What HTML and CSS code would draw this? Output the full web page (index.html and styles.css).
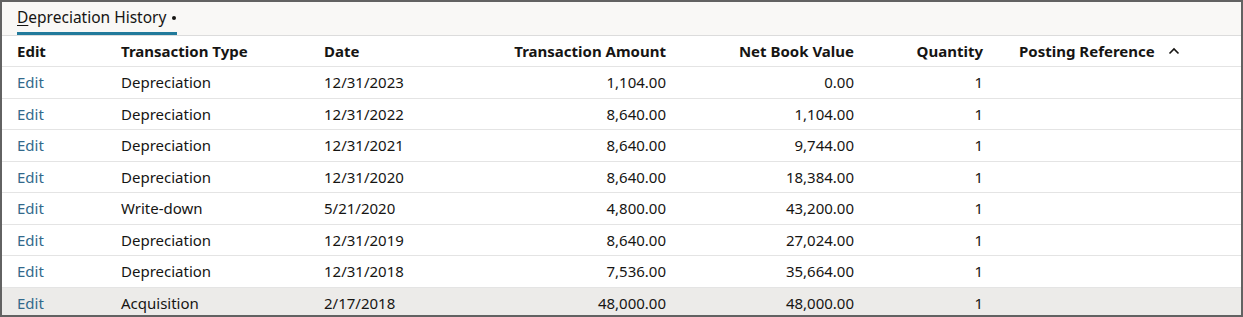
FILE: index.html
```html
<!DOCTYPE html>
<html>
<head>
<meta charset="utf-8">
<link rel="stylesheet" href="styles.css">
</head>
<body>
<div class="frame">
  <div class="tabbar">
    <div class="tab"><span class="tab-label"><u>D</u>epreciation History</span><span class="tab-dot"></span></div>
  </div>
  <div class="table">
    <div class="row head">
      <div class="c c-edit">Edit</div>
      <div class="c c-type">Transaction Type</div>
      <div class="c c-date">Date</div>
      <div class="c c-amt num">Transaction Amount</div>
      <div class="c c-nbv num">Net Book Value</div>
      <div class="c c-qty num">Quantity</div>
      <div class="c c-ref">Posting Reference<svg class="caret" width="12" height="8" viewBox="0 0 12 8"><path d="M1.5 6.5 L6 2 L10.5 6.5" fill="none" stroke="#161513" stroke-width="1.6"/></svg></div>
    </div>
    <div class="row">
      <div class="c c-edit link">Edit</div><div class="c c-type">Depreciation</div><div class="c c-date">12/31/2023</div><div class="c c-amt num">1,104.00</div><div class="c c-nbv num">0.00</div><div class="c c-qty num">1</div><div class="c c-ref"></div>
    </div>
    <div class="row">
      <div class="c c-edit link">Edit</div><div class="c c-type">Depreciation</div><div class="c c-date">12/31/2022</div><div class="c c-amt num">8,640.00</div><div class="c c-nbv num">1,104.00</div><div class="c c-qty num">1</div><div class="c c-ref"></div>
    </div>
    <div class="row">
      <div class="c c-edit link">Edit</div><div class="c c-type">Depreciation</div><div class="c c-date">12/31/2021</div><div class="c c-amt num">8,640.00</div><div class="c c-nbv num">9,744.00</div><div class="c c-qty num">1</div><div class="c c-ref"></div>
    </div>
    <div class="row">
      <div class="c c-edit link">Edit</div><div class="c c-type">Depreciation</div><div class="c c-date">12/31/2020</div><div class="c c-amt num">8,640.00</div><div class="c c-nbv num">18,384.00</div><div class="c c-qty num">1</div><div class="c c-ref"></div>
    </div>
    <div class="row">
      <div class="c c-edit link">Edit</div><div class="c c-type">Write-down</div><div class="c c-date">5/21/2020</div><div class="c c-amt num">4,800.00</div><div class="c c-nbv num">43,200.00</div><div class="c c-qty num">1</div><div class="c c-ref"></div>
    </div>
    <div class="row">
      <div class="c c-edit link">Edit</div><div class="c c-type">Depreciation</div><div class="c c-date">12/31/2019</div><div class="c c-amt num">8,640.00</div><div class="c c-nbv num">27,024.00</div><div class="c c-qty num">1</div><div class="c c-ref"></div>
    </div>
    <div class="row">
      <div class="c c-edit link">Edit</div><div class="c c-type">Depreciation</div><div class="c c-date">12/31/2018</div><div class="c c-amt num">7,536.00</div><div class="c c-nbv num">35,664.00</div><div class="c c-qty num">1</div><div class="c c-ref"></div>
    </div>
    <div class="row selected">
      <div class="c c-edit link">Edit</div><div class="c c-type">Acquisition</div><div class="c c-date">2/17/2018</div><div class="c c-amt num">48,000.00</div><div class="c c-nbv num">48,000.00</div><div class="c c-qty num">1</div><div class="c c-ref"></div>
    </div>
  </div>
</div>
</body>
</html>
```
FILE: styles.css
```css
* { box-sizing: border-box; }
html, body { margin: 0; padding: 0; background: #ffffff; }
body {
  font-family: "Noto Sans", "Liberation Sans", sans-serif;
  font-size: 15px;
  color: #161513;
}
.frame {
  width: 1243px;
  height: 317px;
  border: 2px solid #626262;
  overflow: hidden;
  background: #ffffff;
}
.tabbar {
  height: 34px;
  background: #f9f8f6;
  border-bottom: 1px solid #dcdcdc;
  display: flex;
  padding-left: 15px;
}
.tab {
  display: flex;
  align-items: center;
  gap: 6px;
  height: 33px;
  border-bottom: 3px solid #227a9b;
  padding-top: 0;
  padding-right: 1px;
  font-size: 15.5px;
  color: #161513;
}
.tab u { text-decoration-thickness: 1px; text-underline-offset: 2px; }
.tab-dot {
  width: 4px;
  height: 4px;
  border-radius: 50%;
  background: #161513;
  margin-top: 2px;
}
.row {
  display: grid;
  grid-template-columns: 104px 203px 111px 261px 188px 129px 1fr;
  height: 31.5px;
  align-items: center;
  border-bottom: 1px solid #e4e4e4;
}
.row.head { height: 31px; font-weight: 700; }
.row.selected { background: #ecebe9; border-bottom: none; }
.c { padding: 0 15px; white-space: nowrap; }
.num { text-align: right; }
.c-ref { padding-left: 21px; display: flex; align-items: center; }
.caret { margin-left: 13px; }
.link { color: #33698c; }
```
